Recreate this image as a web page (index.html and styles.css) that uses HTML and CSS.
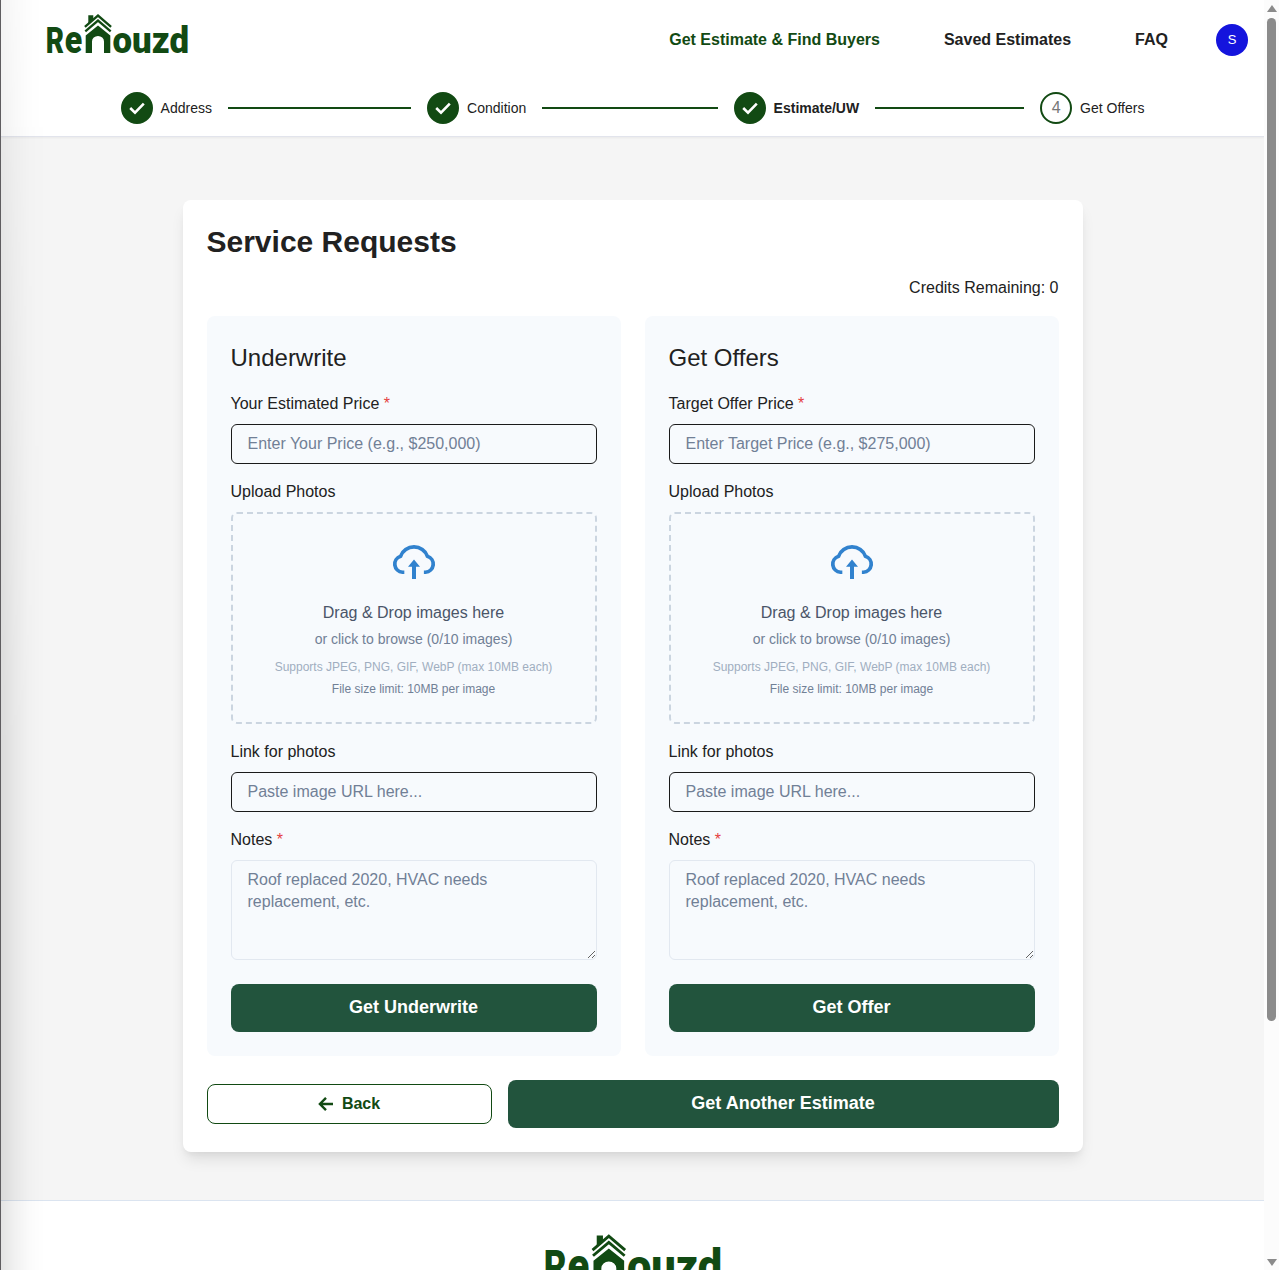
FILE: index.html
```html
<!DOCTYPE html>
<html lang="en">
<head>
<meta charset="utf-8">
<title>Renouzd - Service Requests</title>
<link rel="stylesheet" href="styles.css">
</head>
<body>
<svg class="defs" width="0" height="0" aria-hidden="true">
  <symbol id="house" viewBox="0 0 28 39">
    <path d="M4.300 10V1.200h5V5.500z"/>
    <path d="M.9 12.900 14 1.600l13.100 11.300M1.300 17.400 14 6.600l12.700 10.800" fill="none" stroke="currentColor" stroke-width="2.300"/>
    <path d="M14 11.600 26.300 21.500V39H20V27.500a6 5.500 0 0 0-12 0V39H1.700V21.500z"/>
  </symbol>
  <symbol id="check" viewBox="0 0 20 20">
    <path d="M3.200 10 8 14.600 16.800 5.600" fill="none" stroke="currentColor" stroke-width="2.600"/>
  </symbol>
  <symbol id="cloud" viewBox="0 0 48 48">
    <path d="M14.700 34H13a8.300 8.300 0 0 1-1.900-16.100A13.600 13.600 0 0 1 36.900 17.900 8.300 8.300 0 0 1 35 34H33.500" transform="translate(-.96 .3) scale(1.040 1)" fill="none" stroke="currentColor" stroke-width="3.600"/>
    <path d="M24 21.500 30 28.700H26V41H22V28.700H18z"/>
  </symbol>
</svg>
<div class="window">
  <div class="page">
    <header class="header">
      <div class="topbar">
        <svg class="logo" viewBox="0 0 142 40" role="img" aria-label="Renouzd">
          <text class="logo-text" x="-.3" y="38.500" font-size="36" textLength="18.300" lengthAdjust="spacingAndGlyphs">R</text>
          <text class="logo-text" x="18.800" y="38.500" font-size="38" textLength="17.500" lengthAdjust="spacingAndGlyphs">e</text>
          <use href="#house" x="38" y="0" width="28" height="39"/>
          <text class="logo-text" x="66.500" y="38.500" font-size="37" textLength="76.500" lengthAdjust="spacingAndGlyphs">ouzd</text>
        </svg>
        <nav class="nav">
          <a class="nav-link active">Get Estimate &amp; Find Buyers</a>
          <a class="nav-link">Saved Estimates</a>
          <a class="nav-link">FAQ</a>
          <span class="avatar">S</span>
        </nav>
      </div>
      <div class="stepper">
        <div class="step"><span class="dot done"><svg class="check"><use href="#check"/></svg></span><span>Address</span><i class="line"></i></div>
        <div class="step"><span class="dot done"><svg class="check"><use href="#check"/></svg></span><span>Condition</span><i class="line"></i></div>
        <div class="step current"><span class="dot done"><svg class="check"><use href="#check"/></svg></span><span>Estimate/UW</span><i class="line"></i></div>
        <div class="step"><span class="dot">4</span><span>Get Offers</span></div>
      </div>
    </header>
    <main class="main">
      <section class="card">
        <h1 class="title">Service Requests</h1>
        <p class="credits">Credits Remaining: 0</p>
        <div class="panels">
          <form class="panel">
            <h2 class="panel-title">Underwrite</h2>
            <label class="label">Your Estimated Price <span class="req">*</span></label>
            <input class="input" placeholder="Enter Your Price (e.g., $250,000)">
            <label class="label">Upload Photos</label>
            <div class="drop">
              <svg class="cloud"><use href="#cloud"/></svg>
              <p class="drop-main">Drag &amp; Drop images here</p>
              <p class="drop-sub">or click to browse (0/10 images)</p>
              <p class="drop-types">Supports JPEG, PNG, GIF, WebP (max 10MB each)</p>
              <p class="drop-limit">File size limit: 10MB per image</p>
            </div>
            <label class="label">Link for photos</label>
            <input class="input" placeholder="Paste image URL here...">
            <label class="label">Notes <span class="req">*</span></label>
            <textarea class="notes" placeholder="Roof replaced 2020, HVAC needs replacement, etc."></textarea>
            <button class="btn" type="button">Get Underwrite</button>
          </form>
          <form class="panel">
            <h2 class="panel-title">Get Offers</h2>
            <label class="label">Target Offer Price <span class="req">*</span></label>
            <input class="input" placeholder="Enter Target Price (e.g., $275,000)">
            <label class="label">Upload Photos</label>
            <div class="drop">
              <svg class="cloud"><use href="#cloud"/></svg>
              <p class="drop-main">Drag &amp; Drop images here</p>
              <p class="drop-sub">or click to browse (0/10 images)</p>
              <p class="drop-types">Supports JPEG, PNG, GIF, WebP (max 10MB each)</p>
              <p class="drop-limit">File size limit: 10MB per image</p>
            </div>
            <label class="label">Link for photos</label>
            <input class="input" placeholder="Paste image URL here...">
            <label class="label">Notes <span class="req">*</span></label>
            <textarea class="notes" placeholder="Roof replaced 2020, HVAC needs replacement, etc."></textarea>
            <button class="btn" type="button">Get Offer</button>
          </form>
        </div>
        <div class="actions">
          <button class="btn-back" type="button"><svg class="arrow" viewBox="0 0 16 16"><path d="M15 8H2M8 1.800 1.900 8 8 14.200" fill="none" stroke="currentColor" stroke-width="2.400"/></svg>Back</button>
          <button class="btn" type="button">Get Another Estimate</button>
        </div>
      </section>
    </main>
    <footer class="footer">
      <svg class="logo-footer" viewBox="0 0 142 40" role="img" aria-label="Renouzd">
        <text class="logo-text" x="-.3" y="38.500" font-size="36" textLength="18.300" lengthAdjust="spacingAndGlyphs">R</text>
        <text class="logo-text" x="18.800" y="38.500" font-size="38" textLength="17.500" lengthAdjust="spacingAndGlyphs">e</text>
        <use href="#house" x="38" y="0" width="28" height="39"/>
        <text class="logo-text" x="66.500" y="38.500" font-size="37" textLength="76.500" lengthAdjust="spacingAndGlyphs">ouzd</text>
      </svg>
    </footer>
  </div>
  <div class="scrollbar"><i class="tri up"></i><i class="thumb"></i><i class="tri down"></i></div>
</div>
</body>
</html>
```
FILE: styles.css
```css
* { box-sizing: border-box; margin: 0; }
body {
  height: 1270px;
  overflow: hidden;
  font: 16px/24px "Liberation Sans", Arial, sans-serif;
  color: #212121;
  background: #fff;
}
.defs { display: block; }
.window { display: flex; height: 1270px; overflow: hidden; border-left: 1px solid #5f5d60; position: relative; }
/* soft shade along the left window edge */
.window::before {
  content: "";
  position: absolute;
  inset: 0 auto 0 0;
  width: 44px;
  z-index: 2;
  background: linear-gradient(90deg, rgba(0,0,0,.11), rgba(0,0,0,.055) 30%, rgba(0,0,0,.015) 65%, transparent);
  -webkit-mask-image: linear-gradient(rgba(0,0,0,.4), #000 60%);
  mask-image: linear-gradient(rgba(0,0,0,.4), #000 60%);
  pointer-events: none;
}
.page { flex: none; width: 1263px; display: flex; flex-direction: column; background: #f5f5f5; }

.header { flex: none; height: 137px; background: #fff; border-bottom: 1px solid #e2e4ec; box-shadow: 0 1px 2px rgba(0,0,0,.05); }
.topbar { display: flex; justify-content: space-between; height: 80px; padding: 0 16px 0 45px; }
.logo { width: 142px; height: 40px; margin-top: 14px; color: #124a13; fill: #124a13; overflow: visible; }
.logo-text { font-family: Roboto, Inter, sans-serif; font-weight: 900; }
.nav { display: flex; align-items: center; gap: 64px; }
.nav-link { font-weight: 700; }
.nav-link.active { color: #124a13; }
.avatar { width: 32px; height: 32px; margin-left: -16px; border-radius: 50%; background: #1414dd; color: #fff; font-size: 13px; line-height: 32px; text-align: center; }
.stepper { display: grid; grid-template-columns: repeat(3, 306.500px) auto; padding-left: 119.600px; margin-top: 12px; font-size: 14px; }
.step { display: flex; align-items: center; height: 32px; }
.step.current { font-weight: 700; }
.dot { flex: none; width: 32px; height: 32px; margin-right: 8px; border: 2px solid #124a13; border-radius: 50%; color: #777; font-size: 16px; display: flex; align-items: center; justify-content: center; }
.dot.done { background: #124a13; color: #fff; }
.check { width: 20px; height: 20px; }
.line { flex: 1; height: 2px; margin: 0 16px; background: #124a13; }

.main { flex: none; padding: 63px 0 48px; }
.card { width: 900px; margin: 0 auto; padding: 24px; background: #fff; border-radius: 8px; box-shadow: 0 10px 15px -3px rgba(0,0,0,.1), 0 4px 6px -2px rgba(0,0,0,.05); }
.title { font-size: 30px; line-height: 36px; font-weight: 700; }
.credits { margin: 16px 0; text-align: right; }
.panels { display: grid; grid-template-columns: 1fr 1fr; gap: 24px; }
.panel { display: flex; flex-direction: column; padding: 24px; background: #f7fafd; border-radius: 8px; }
.panel-title { font-size: 24px; line-height: 36px; font-weight: 400; margin-bottom: 16px; }
.label { margin-bottom: 8px; }
.req { color: #e53e3e; }
.input, .notes { width: 100%; padding: 0 16px; margin-bottom: 16px; background: transparent; border: 1px solid #1a1a1a; border-radius: 6px; font: inherit; color: inherit; }
.input { height: 40px; }
.notes { display: block; height: 100px; padding: 8px 16px; margin-bottom: 24px; border-color: #e2e8f0; line-height: 22px; resize: vertical; }
.input::placeholder, .notes::placeholder { color: #718096; opacity: 1; }
.drop { height: 212px; margin-bottom: 16px; padding: 24px; border: 2px dashed #cbd5e0; border-radius: 6px; text-align: center; }
.cloud { display: block; width: 48px; height: 48px; margin: 0 auto 15px; color: #3182ce; fill: #3182ce; }
.drop-main { color: #4a5568; }
.drop-sub { margin-top: 4px; font-size: 14px; line-height: 21px; color: #718096; }
.drop-types { margin-top: 8px; font-size: 12px; line-height: 18px; color: #a0aec0; }
.drop-limit { margin-top: 4px; font-size: 12px; line-height: 18px; color: #718096; }
.btn { height: 48px; padding: 0 0 2px; border: 0; border-radius: 8px; background: #22543d; color: #fff; font: 700 18px/24px "Liberation Sans", Arial, sans-serif; }
.actions { display: grid; grid-template-columns: 285px 1fr; gap: 16px; align-items: center; margin-top: 24px; }
.btn-back { height: 40px; display: flex; align-items: center; justify-content: center; gap: 8px; padding: 0; border: 1px solid #124a13; border-radius: 8px; background: #fff; color: #124a13; font: 700 16px/24px "Liberation Sans", Arial, sans-serif; }
.arrow { width: 16px; height: 16px; }

.footer { flex: none; height: 130px; padding-top: 33px; background: #fff; border-top: 1px solid #dbe4f0; text-align: center; }
.logo-footer { width: 177px; height: 50px; color: #124a13; fill: #124a13; overflow: visible; }

.scrollbar { flex: none; width: 15px; display: flex; flex-direction: column; align-items: center; background: #fcfcfc; z-index: 1; }
.thumb { width: 9px; height: 1003px; margin-top: 6px; border-radius: 5px; background: #8b8b8b; }
.tri { border: 5px solid transparent; border-top-width: 0; border-bottom-width: 0; }
.tri.up { margin-top: 5px; border-bottom: 7px solid #8b8b8b; }
.tri.down { margin: auto 0 4px; border-top: 7px solid #8b8b8b; }
```
